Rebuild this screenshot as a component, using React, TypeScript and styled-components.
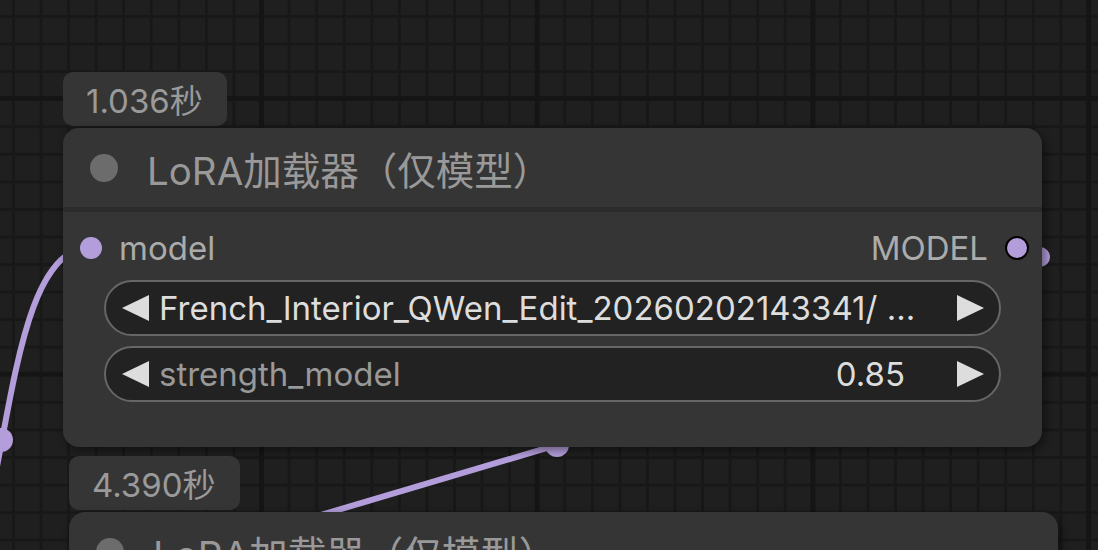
import styled, { createGlobalStyle } from 'styled-components';

const GlobalStyle = createGlobalStyle`
  html, body {
    margin: 0;
    padding: 0;
    background: #1f1f1f;
  }
  body {
    font-family: Inter, "Noto Sans CJK SC", sans-serif;
  }
`;

const CELL = 27.57;
const MAJOR = CELL * 10;

const Canvas = styled.div`
  position: relative;
  width: 1098px;
  height: 550px;
  overflow: hidden;
  background-color: #1f1f1f;
  background-image:
    linear-gradient(to right, #151515 5px, transparent 5px),
    linear-gradient(to bottom, #151515 5px, transparent 5px),
    linear-gradient(to right, #181818 3px, transparent 3px),
    linear-gradient(to bottom, #181818 3px, transparent 3px);
  background-size:
    ${MAJOR}px 100%,
    100% ${MAJOR}px,
    ${CELL}px 100%,
    100% ${CELL}px;
  background-position:
    259px 0,
    0 96px,
    12px 0,
    0 15px;
`;

const WireLayer = styled.svg`
  position: absolute;
  inset: 0;
  width: 1098px;
  height: 550px;
`;

const NodeGroup = styled.div<{ $x: number; $y: number; $w: number }>`
  position: absolute;
  left: ${(p) => p.$x}px;
  top: ${(p) => p.$y}px;
  width: ${(p) => p.$w}px;
  display: flex;
  flex-direction: column;
  gap: 2px;
`;

const Badge = styled.div`
  align-self: flex-start;
  height: 54px;
  box-sizing: border-box;
  padding: 0 24px 0 23px;
  display: flex;
  align-items: center;
  background: #353535;
  border-radius: 10px;
  color: #9a9a9a;
  font-size: 33px;
`;

const Node = styled.div<{ $h: number }>`
  height: ${(p) => p.$h}px;
  background: #353535;
  border-radius: 16px;
  box-shadow: 3px 3px 10px rgba(0, 0, 0, 0.45);
  display: flex;
  flex-direction: column;
`;

const TitleBar = styled.div`
  height: 79px;
  display: flex;
  align-items: center;
  gap: 29px;
  padding-left: 27px;
  color: #999;
  font-size: 38.5px;
  white-space: nowrap;
`;

const TitleDot = styled.span`
  width: 28px;
  height: 28px;
  border-radius: 50%;
  background: #6c6c6c;
  flex: none;
`;

const Divider = styled.div`
  height: 5px;
  background: #2c2c2c;
`;

const Body = styled.div`
  padding-top: 8px;
  display: flex;
  flex-direction: column;
`;

const SlotRow = styled.div`
  height: 56px;
  display: flex;
  align-items: center;
  justify-content: space-between;
  padding: 0 13px 0 17px;
  font-size: 33px;
  color: #ababab;
`;

const Slot = styled.div`
  display: flex;
  align-items: center;
  gap: 17px;
`;

const SlotDot = styled.span<{ $out?: boolean }>`
  width: ${(p) => (p.$out ? 20 : 22)}px;
  height: ${(p) => (p.$out ? 20 : 22)}px;
  border-radius: 50%;
  background: #b39ddb;
  border: ${(p) => (p.$out ? '2px solid #000' : 'none')};
  flex: none;
`;

const Widgets = styled.div`
  display: flex;
  flex-direction: column;
  gap: 10px;
  margin: 4px 41px 0;
`;

const Widget = styled.div`
  height: 56px;
  box-sizing: border-box;
  border: 2px solid #666;
  border-radius: 28px;
  background: #222;
  display: flex;
  align-items: center;
  padding: 0 15px 0 16px;
  font-size: 33px;
  white-space: nowrap;
`;

const WidgetText = styled.span<{ $dim?: boolean }>`
  margin-left: 10px;
  color: ${(p) => (p.$dim ? '#999' : '#ddd')};
  overflow: hidden;
`;

const WidgetValue = styled.span`
  margin-left: auto;
  color: #ddd;
`;

const ArrowBox = styled.svg<{ $end?: boolean }>`
  width: 27px;
  height: 26px;
  flex: none;
  margin-left: ${(p) => (p.$end ? 'auto' : '0')};
`;

const Arrow = ({ dir }: { dir: 'left' | 'right' }) => (
  <ArrowBox viewBox="0 0 27 26" $end={dir === 'right'}>
    {dir === 'left' ? (
      <polygon points="27,0 27,26 0,13" fill="#ddd" />
    ) : (
      <polygon points="0,0 0,26 27,13" fill="#ddd" />
    )}
  </ArrowBox>
);

const ValueSpacer = styled.span`
  width: 52px;
  flex: none;
`;

const LoraNode = ({ x, y, w, h, time }: { x: number; y: number; w: number; h: number; time: string }) => (
  <NodeGroup $x={x} $y={y} $w={w}>
    <Badge>{time}</Badge>
    <Node $h={h}>
      <TitleBar>
        <TitleDot />
        LoRA加载器（仅模型）
      </TitleBar>
      <Divider />
      <Body>
        <SlotRow>
          <Slot>
            <SlotDot />
            model
          </Slot>
          <Slot>
            MODEL
            <SlotDot $out />
          </Slot>
        </SlotRow>
        <Widgets>
          <Widget>
            <Arrow dir="left" />
            <WidgetText>French_Interior_QWen_Edit_20260202143341/ …</WidgetText>
            <Arrow dir="right" />
          </Widget>
          <Widget>
            <Arrow dir="left" />
            <WidgetText $dim>strength_model</WidgetText>
            <WidgetValue>0.85</WidgetValue>
            <ValueSpacer />
            <ArrowBox viewBox="0 0 27 26">
              <polygon points="0,0 0,26 27,13" fill="#ddd" />
            </ArrowBox>
          </Widget>
        </Widgets>
      </Body>
    </Node>
  </NodeGroup>
);

const WIRE = '#b39ddb';

export default function App() {
  return (
    <>
      <GlobalStyle />
      <Canvas>
        <WireLayer viewBox="0 0 1098 550">
          <path d="M -87 633 C 19 633, -15 247, 91 247" fill="none" stroke={WIRE} strokeWidth={6} />
          <circle cx={1} cy={440} r={12} fill={WIRE} />
          <path d="M 1040 257 L 557 445 L 250 536" fill="none" stroke={WIRE} strokeWidth={6} />
          <circle cx={557} cy={445} r={12} fill={WIRE} />
          <circle cx={1040} cy={257} r={10} fill={WIRE} />
        </WireLayer>
        <LoraNode x={63} y={72} w={979} h={319} time="1.036秒" />
        <LoraNode x={69} y={456} w={989} h={319} time="4.390秒" />
      </Canvas>
    </>
  );
}
